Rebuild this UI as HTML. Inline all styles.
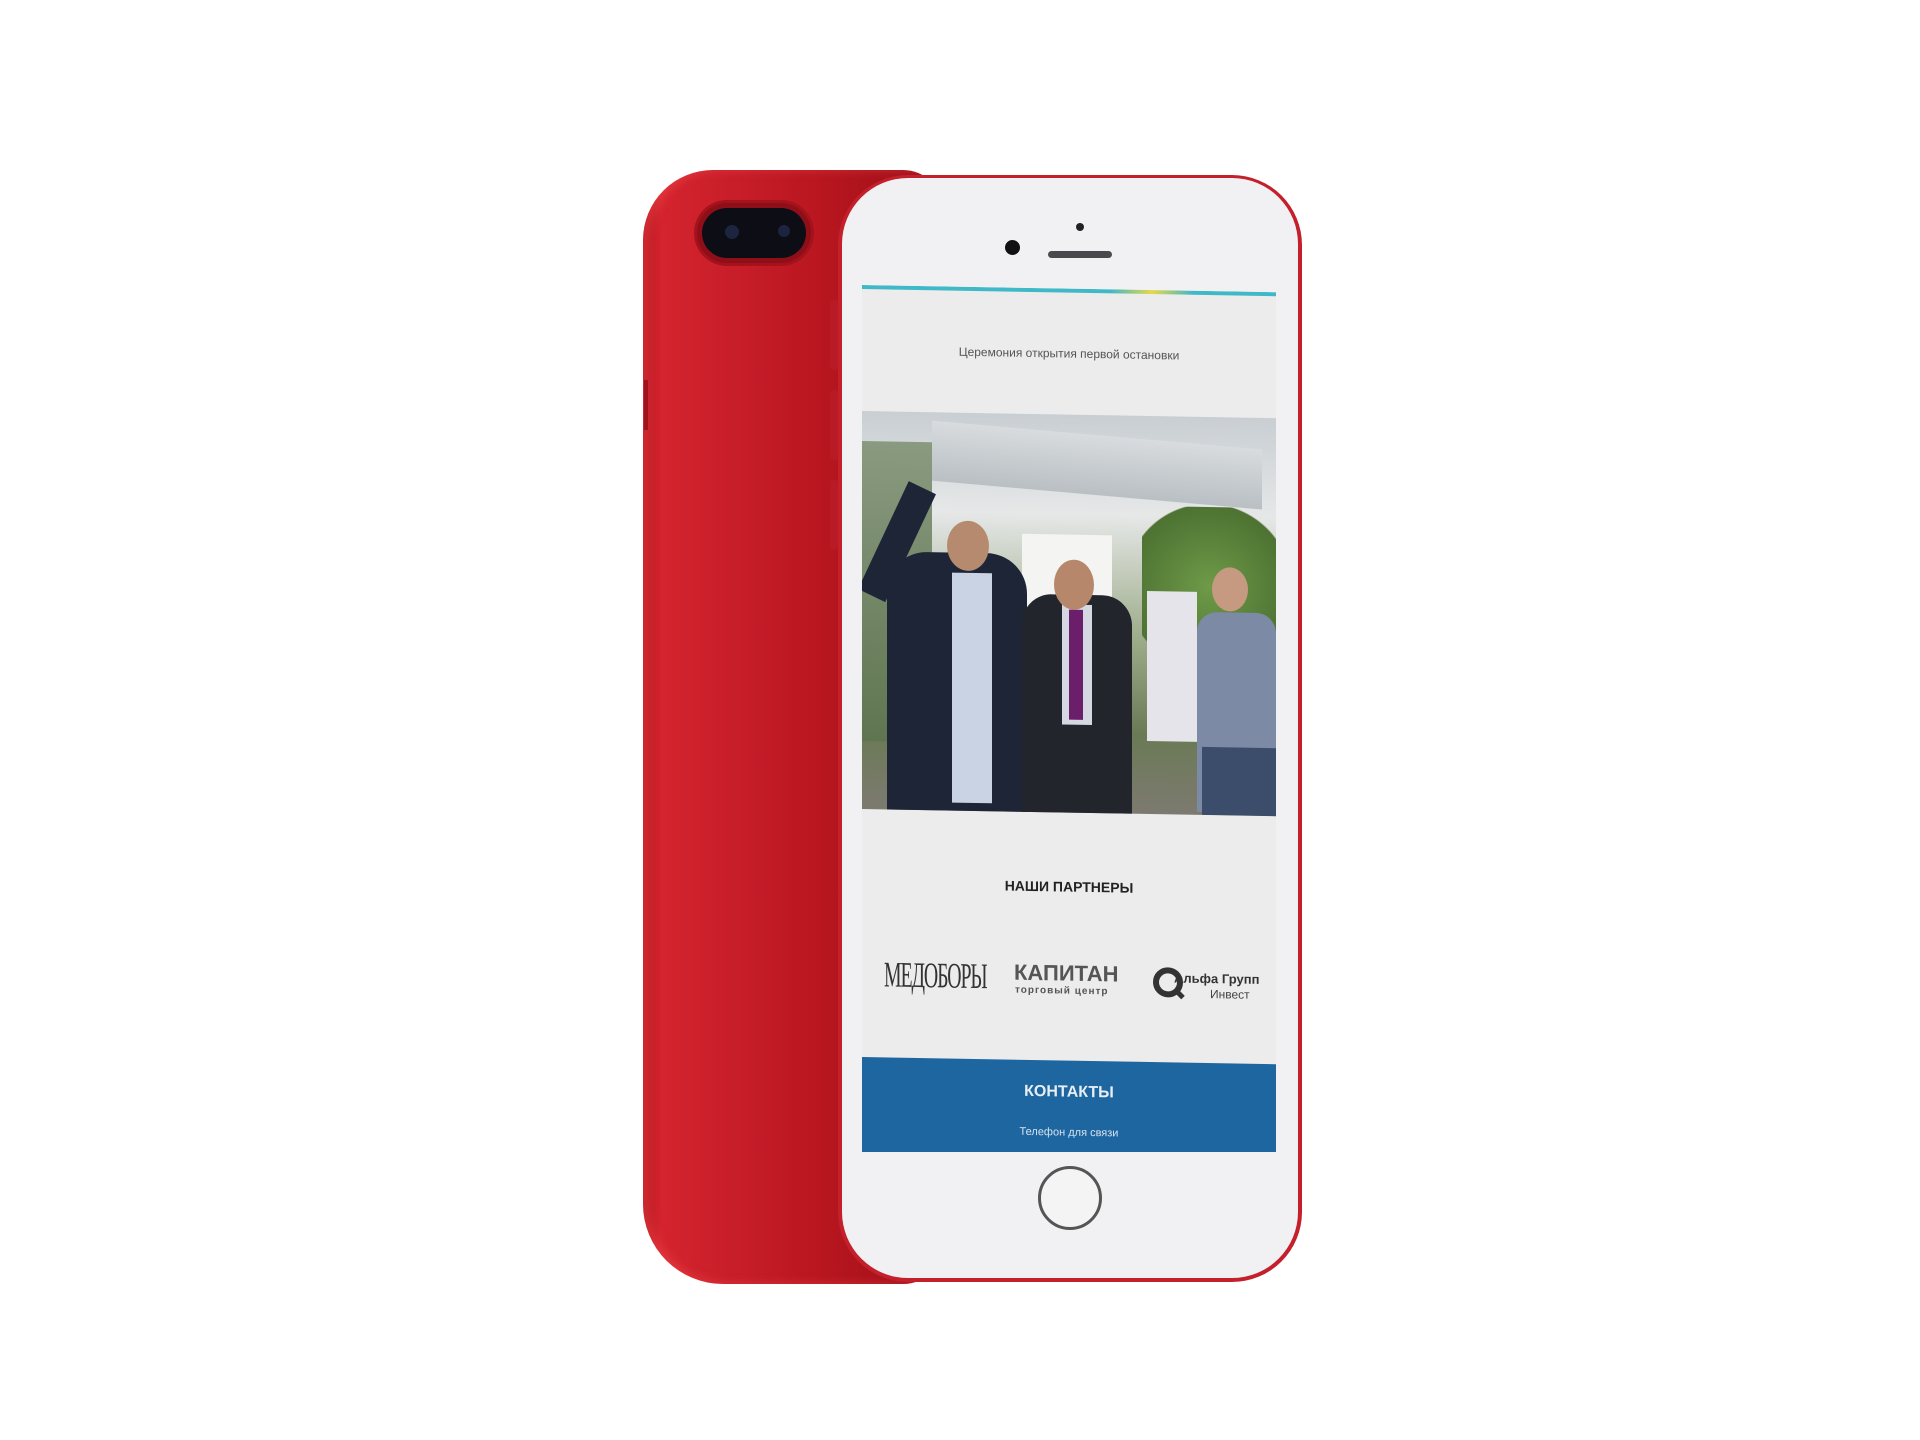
<!DOCTYPE html>
<html><head><meta charset="utf-8"><style>
*{margin:0;padding:0;box-sizing:border-box}
body{width:1920px;height:1440px;background:#fff;position:relative;overflow:hidden;font-family:"Liberation Sans","DejaVu Sans",sans-serif}
.a{position:absolute}
</style></head><body>
<!-- back phone -->
<div class="a" style="left:643px;top:170px;width:300px;height:1114px;border-radius:70px 40px 40px 80px;background:linear-gradient(90deg,#b3141f 0%,#d4242e 6%,#c81e2a 30%,#b8161f 60%,#9a0f18 100%);box-shadow:inset 6px 0 10px rgba(255,90,90,.35)"></div>
<div class="a" style="left:697px;top:203px;width:114px;height:60px;border-radius:30px;background:#8e0f17;box-shadow:0 0 0 3px #a5121c"></div>
<div class="a" style="left:702px;top:208px;width:104px;height:50px;border-radius:25px;background:#0d0d16"></div>
<div class="a" style="left:725px;top:225px;width:14px;height:14px;border-radius:50%;background:#1c2440"></div>
<div class="a" style="left:778px;top:225px;width:12px;height:12px;border-radius:50%;background:#1c2440"></div>
<div class="a" style="left:644px;top:380px;width:4px;height:50px;background:#a0121b"></div>
<!-- front phone -->
<div class="a" style="left:838px;top:175px;width:464px;height:1107px;border-radius:70px;background:#c4202b"></div>
<div class="a" style="left:842px;top:178px;width:456px;height:1100px;border-radius:66px;background:#f1f0f2"></div>
<div class="a" style="left:830px;top:300px;width:8px;height:70px;background:#b81b25;border-radius:3px"></div>
<div class="a" style="left:830px;top:390px;width:8px;height:70px;background:#b81b25;border-radius:3px"></div>
<div class="a" style="left:830px;top:480px;width:8px;height:70px;background:#b81b25;border-radius:3px"></div>
<div class="a" style="left:1005px;top:240px;width:15px;height:15px;border-radius:50%;background:#111"></div>
<div class="a" style="left:1076px;top:223px;width:8px;height:8px;border-radius:50%;background:#222"></div>
<div class="a" style="left:1048px;top:251px;width:64px;height:7px;border-radius:4px;background:#4a4a4e"></div>
<!-- screen -->
<div class="a" style="left:862px;top:285px;width:414px;height:875px;background:#ececec;overflow:hidden;transform:skewY(1deg);transform-origin:0 0">
  <div class="a" style="left:0;top:0;width:414px;height:4px;background:linear-gradient(90deg,#3fb8c8 60%,#e6d94a 70%,#3fb8c8 80%)"></div>
  <div class="a" style="left:0;top:58px;width:414px;text-align:center;font-size:12px;color:#555">Церемония открытия первой остановки</div>
  <div class="a" style="left:0;top:126px;width:414px;height:398px;overflow:hidden;background:linear-gradient(180deg,#c8ced2 0%,#e6e8e8 25%,#9fae8c 55%,#6a7a55 80%,#7d7a70 100%)">
    <div class="a" style="left:70px;top:20px;width:330px;height:60px;background:linear-gradient(180deg,#d8dcde,#b9bfc3);transform:skewY(4deg)"></div>
    <div class="a" style="left:0;top:30px;width:70px;height:300px;background:linear-gradient(180deg,#8a9a80,#5f7550)"></div>
    <div class="a" style="left:280px;top:90px;width:134px;height:200px;background:radial-gradient(circle at 50% 40%,#6e9a48,#4d7232 60%,transparent 61%)"></div>
    <div class="a" style="left:160px;top:120px;width:90px;height:100px;background:#f4f4f2"></div>
    <div class="a" style="left:25px;top:140px;width:140px;height:260px;background:#1d2536;border-radius:40px 40px 0 0"></div>
    <div class="a" style="left:90px;top:160px;width:40px;height:230px;background:#c9d3e3"></div>
    <div class="a" style="left:85px;top:108px;width:42px;height:50px;border-radius:50%;background:#b58a6e"></div>
    <div class="a" style="left:20px;top:70px;width:30px;height:120px;background:#1d2536;transform:rotate(25deg)"></div>
    <div class="a" style="left:160px;top:180px;width:110px;height:220px;background:#22252c;border-radius:30px 30px 0 0"></div>
    <div class="a" style="left:200px;top:190px;width:30px;height:120px;background:#d5d8e2"></div>
    <div class="a" style="left:207px;top:195px;width:14px;height:110px;background:#6b1f6a"></div>
    <div class="a" style="left:192px;top:145px;width:40px;height:50px;border-radius:50%;background:#b7876b"></div>
    <div class="a" style="left:285px;top:175px;width:50px;height:150px;background:#e4e4ea"></div>
    <div class="a" style="left:335px;top:195px;width:79px;height:200px;background:#7c8aa6;border-radius:20px 20px 0 0"></div>
    <div class="a" style="left:350px;top:150px;width:36px;height:44px;border-radius:50%;background:#c59a80"></div>
    <div class="a" style="left:340px;top:330px;width:74px;height:68px;background:#3b4d6a"></div>
  </div>
  <div class="a" style="left:0;top:590px;width:414px;text-align:center;font-size:14px;font-weight:bold;color:#222">НАШИ ПАРТНЕРЫ</div>
  <div class="a" style="left:22px;top:668px;font-family:'Liberation Serif',serif;font-size:36px;color:#333;letter-spacing:-2px;transform:scaleX(.55);transform-origin:0 0">МЕДОБОРЫ</div>
  <div class="a" style="left:152px;top:672px;font-size:22px;font-weight:bold;color:#555">КАПИТАН</div>
  <div class="a" style="left:153px;top:697px;font-size:10px;font-weight:bold;color:#555;letter-spacing:1px">торговый центр</div>
  <svg class="a" style="left:290px;top:676px" width="34" height="34"><circle cx="16" cy="16" r="12" fill="none" stroke="#333" stroke-width="6"/><path d="M23 23l8 8" stroke="#333" stroke-width="5"/></svg>
  <div class="a" style="left:312px;top:680px;font-size:13px;font-weight:bold;color:#333">Альфа Групп</div>
  <div class="a" style="left:348px;top:696px;font-size:12px;color:#444">Инвест</div>
  <div class="a" style="left:0;top:772px;width:414px;height:120px;background:#1e66a0"></div>
  <div class="a" style="left:0;top:795px;width:414px;text-align:center;font-size:16px;font-weight:bold;color:#e8eef5">КОНТАКТЫ</div>
  <div class="a" style="left:0;top:838px;width:414px;text-align:center;font-size:11px;color:#d5e2ef">Телефон для связи</div>
  <div class="a" style="left:0;top:864px;width:414px;text-align:center;font-size:11px;color:#d5e2ef">+7 (978) 000-00-00</div>
</div>
<div class="a" style="left:850px;top:1152px;width:440px;height:20px;background:#f1f0f2"></div>
<!-- home button -->
<div class="a" style="left:1038px;top:1166px;width:64px;height:64px;border-radius:50%;border:3px solid #555;background:#f4f4f5"></div>
</body></html>
